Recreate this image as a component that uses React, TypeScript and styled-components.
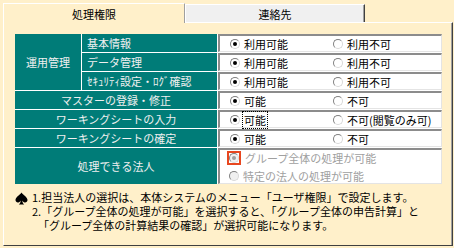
import { FC } from 'react';
import styled, { createGlobalStyle } from 'styled-components';

const cream = '#FFF0CA';
const teal = '#007C78';

const GlobalStyle = createGlobalStyle`
  body {
    margin: 0;
    background: ${cream};
    font-family: "Noto Sans CJK JP", "Noto Sans", sans-serif;
    font-size: 11px;
  }
`;

const Frame = styled.div`
  width: 454px;
  height: 248px;
  overflow: hidden;
  background: ${cream};
`;

const TabStrip = styled.div`
  display: flex;
  align-items: flex-end;
  height: 22px;
  padding-left: 3px;
  box-sizing: border-box;
`;

const Tab = styled.div<{ $active?: boolean }>`
  box-sizing: border-box;
  display: flex;
  align-items: center;
  justify-content: center;
  width: ${p => (p.$active ? 182 : 180)}px;
  height: ${p => (p.$active ? 20 : 18)}px;
  margin-bottom: ${p => (p.$active ? -1 : 0)}px;
  position: relative;
  z-index: ${p => (p.$active ? 1 : 0)};
  background: ${p => (p.$active ? cream : '#F0F0F0')};
  border-top: 1px solid #fff;
  border-left: 1px solid #fff;
  border-right: 1px solid ${p => (p.$active ? '#a0a0a0' : '#404040')};
  box-shadow: ${p => (p.$active ? 'none' : 'inset -1px 0 0 #a0a0a0')};
  color: #000;
`;

const Pane = styled.div`
  box-sizing: border-box;
  width: 450px;
  height: 224px;
  margin-left: 3px;
  padding: 11px 0 0 11px;
  border-top: 1px solid #fff;
  border-left: 1px solid #fff;
  border-right: 1px solid #404040;
  border-bottom: 1px solid #404040;
  box-shadow: inset -1px 0 0 #a0a0a0;
`;

const Grid = styled.div`
  display: grid;
  grid-template-columns: 66px 135px 224px;
  grid-template-rows: repeat(6, 18px) 36px;
  gap: 1px;
  width: 427px;
  background: #fff;
`;

const Label = styled.div<{ $row: string; $col: string; $left?: boolean }>`
  grid-row: ${p => p.$row};
  grid-column: ${p => p.$col};
  background: ${teal};
  color: #f0f0f0;
  display: flex;
  align-items: center;
  justify-content: ${p => (p.$left ? 'flex-start' : 'center')};
  padding-left: ${p => (p.$left ? 5 : 0)}px;
  white-space: nowrap;
`;

const Choices = styled.div<{ $row: number; $stack?: boolean }>`
  grid-row: ${p => p.$row};
  grid-column: 3;
  box-sizing: border-box;
  background: #fff;
  border-style: solid;
  border-width: 2px 1px 1px 2px;
  border-color: #8c8c8c #e4e4e4 #e4e4e4 #8c8c8c;
  display: flex;
  flex-direction: ${p => (p.$stack ? 'column' : 'row')};
  align-items: ${p => (p.$stack ? 'flex-start' : 'center')};
  padding-left: ${p => (p.$stack ? 9 : 10)}px;
`;

const Choice = styled.div<{ $disabled?: boolean }>`
  display: flex;
  align-items: center;
  width: 103px;
  height: 16px;
  white-space: nowrap;
  color: ${p => (p.$disabled ? '#a0a0a0' : '#000')};
`;

const StackedChoice = styled(Choice)`
  width: auto;
  & + & {
    margin-top: 2px;
  }
`;

const Radio = styled.span<{ $on?: boolean; $disabled?: boolean }>`
  box-sizing: border-box;
  width: 10px;
  height: 10px;
  border-radius: 50%;
  border: 1px solid;
  border-color: #808080 #d8d8d8 #d8d8d8 #808080;
  background: ${p => (p.$disabled ? '#f0f0f0' : '#fff')};
  display: inline-flex;
  align-items: center;
  justify-content: center;
  margin-right: 4px;
  flex-shrink: 0;
  &::after {
    content: '';
    width: 4px;
    height: 4px;
    border-radius: 50%;
    background: ${p => (p.$on ? (p.$disabled ? '#a0a0a0' : '#000') : 'transparent')};
  }
`;

const FocusRing = styled.span`
  display: inline-flex;
  border: 2px solid #e8471f;
  margin-left: -2px;
  margin-right: 4px;
  & > span {
    margin-right: 0;
  }
`;

const Dotted = styled.span`
  outline: 1px dotted #000;
  outline-offset: 0;
  padding: 0 1px;
  margin-left: -1px;
`;

const Notes = styled.div`
  display: flex;
  margin-top: 6px;
  color: #000;
`;

const Spade = styled.svg`
  width: 13px;
  height: 13px;
  margin: 2px 4px 0 0;
  flex-shrink: 0;
`;

const NoteLines = styled.div`
  line-height: 14px;
  white-space: nowrap;
`;

const NoteLine = styled.div<{ $indent?: boolean }>`
  padding-left: ${p => (p.$indent ? 6 : 0)}px;
`;

type Pair = { row: number; yes: string; no: string; focus?: boolean };

const pairs: Pair[] = [
  { row: 1, yes: '利用可能', no: '利用不可' },
  { row: 2, yes: '利用可能', no: '利用不可' },
  { row: 3, yes: '利用可能', no: '利用不可' },
  { row: 4, yes: '可能', no: '不可' },
  { row: 5, yes: '可能', no: '不可(閲覧のみ可)', focus: true },
  { row: 6, yes: '可能', no: '不可' },
];

const App: FC = () => {
  return (
    <Frame>
      <GlobalStyle />
      <TabStrip>
        <Tab $active>処理権限</Tab>
        <Tab>連絡先</Tab>
      </TabStrip>
      <Pane>
        <Grid>
          <Label $row="1 / span 3" $col="1">運用管理</Label>
          <Label $row="1" $col="2" $left>基本情報</Label>
          <Label $row="2" $col="2" $left>データ管理</Label>
          <Label $row="3" $col="2" $left>ｾｷｭﾘﾃｨ設定・ﾛｸﾞ確認</Label>
          <Label $row="4" $col="1 / span 2">マスターの登録・修正</Label>
          <Label $row="5" $col="1 / span 2">ワーキングシートの入力</Label>
          <Label $row="6" $col="1 / span 2">ワーキングシートの確定</Label>
          <Label $row="7" $col="1 / span 2">処理できる法人</Label>

          {pairs.map(p => (
            <Choices key={p.row} $row={p.row}>
              <Choice>
                <Radio $on />
                {p.focus ? <Dotted>{p.yes}</Dotted> : p.yes}
              </Choice>
              <Choice>
                <Radio />
                {p.no}
              </Choice>
            </Choices>
          ))}

          <Choices $row={7} $stack>
            <StackedChoice $disabled>
              <FocusRing>
                <Radio $on $disabled />
              </FocusRing>
              グループ全体の処理が可能
            </StackedChoice>
            <StackedChoice $disabled>
              <Radio $disabled />
              特定の法人の処理が可能
            </StackedChoice>
          </Choices>
        </Grid>

        <Notes>
          <Spade viewBox="0 0 13 13">
            <path
              d="M6.5 0.5 C5 3 0.5 5 0.5 8 C0.5 10 2.5 11 4 10.2 C4.8 9.8 5.4 9.2 5.8 8.6 C5.6 10.4 5 11.6 3.8 12.5 L9.2 12.5 C8 11.6 7.4 10.4 7.2 8.6 C7.6 9.2 8.2 9.8 9 10.2 C10.5 11 12.5 10 12.5 8 C12.5 5 8 3 6.5 0.5 Z"
              fill="#000"
            />
          </Spade>
          <NoteLines>
            <NoteLine>1.担当法人の選択は、本体システムのメニュー「ユーザ権限」で設定します。</NoteLine>
            <NoteLine>2.「グループ全体の処理が可能」を選択すると、「グループ全体の申告計算」と</NoteLine>
            <NoteLine $indent>「グループ全体の計算結果の確認」が選択可能になります。</NoteLine>
          </NoteLines>
        </Notes>
      </Pane>
    </Frame>
  );
};

export default App;
